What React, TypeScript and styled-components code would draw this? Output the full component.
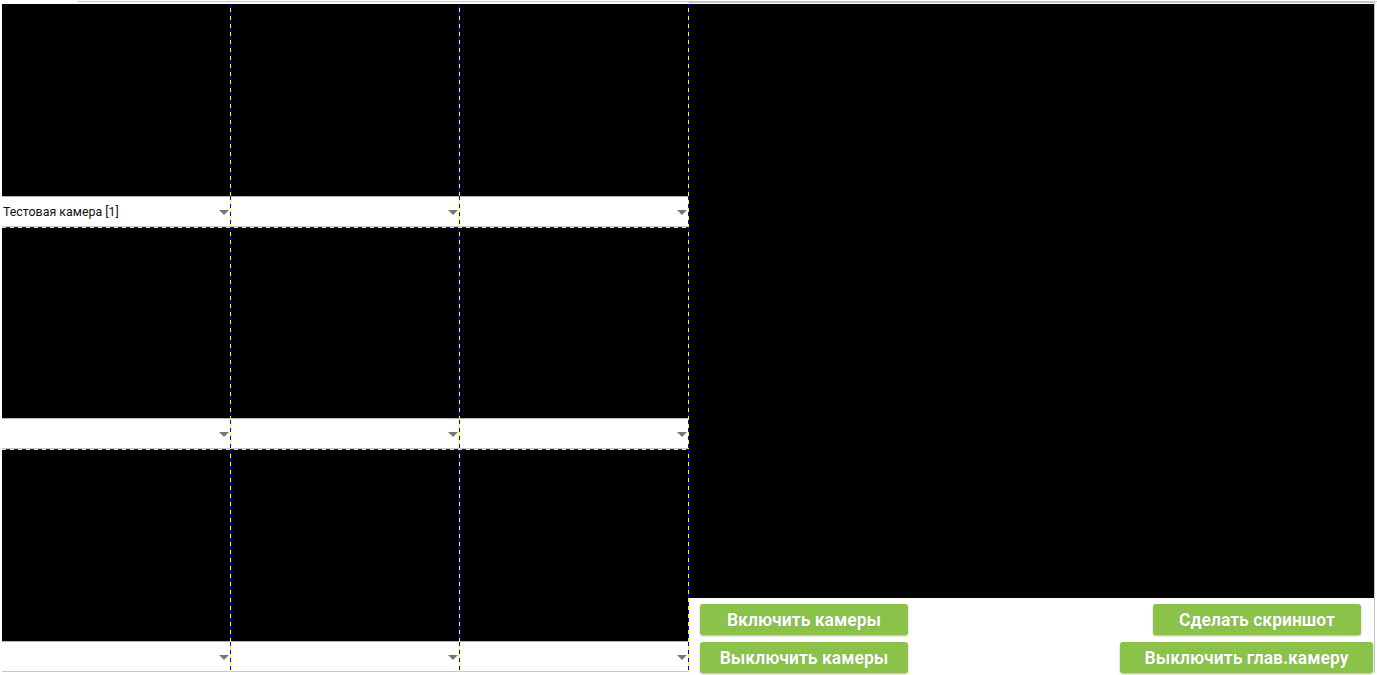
import React from "react";
import styled, { createGlobalStyle } from "styled-components";

const Global = createGlobalStyle`
  html, body { margin: 0; padding: 0; background: #fff; }
  body { font-family: Roboto, "Liberation Sans", sans-serif; overflow: hidden; }
`;

const Page = styled.div`
  width: 1377px;
  height: 675px;
  display: flex;
  flex-direction: column;
`;

const TopRule = styled.div`
  height: 1px;
  margin: 1px 0 2px 78px;
  background: #c4c4c4;
`;

const Body = styled.div`
  display: flex;
  padding-left: 2px;
`;

const GridArea = styled.div`
  display: flex;
  flex-direction: column;
  width: 687px;
`;

const Row = styled.div`
  display: flex;
`;

const Cell = styled.div`
  width: 228px;
  display: flex;
  flex-direction: column;
`;

const Video = styled.div<{ $h: number }>`
  height: ${(p) => p.$h}px;
  background: #000;
`;

const Select = styled.div`
  position: relative;
  height: 29px;
  background: #fff;
  border-top: 1px solid #b5b5b5;
  border-bottom: 1px solid #c8c8c8;
  display: flex;
  align-items: center;
  padding-left: 1px;
  font-size: 12.4px;
  color: #111;
`;

const Arrow = styled.span`
  position: absolute;
  right: 1px;
  top: 13px;
  width: 0;
  height: 0;
  border-left: 5px solid transparent;
  border-right: 5px solid transparent;
  border-top: 5px solid #777;
`;

const VDivider = styled.div`
  width: 1px;
  background: repeating-linear-gradient(
    to bottom,
    #0000ff 0px,
    #0000ff 4px,
    #ffff00 4px,
    #ffff00 8px
  );
`;

const HDivider = styled.div`
  height: 1px;
  width: 687px;
  background: repeating-linear-gradient(
    to right,
    #ffff00 0px,
    #ffff00 4px,
    #0000ff 4px,
    #0000ff 8px
  );
`;

const MainColumn = styled.div`
  width: 685px;
  display: flex;
  flex-direction: column;
  border-right: 1px solid #c4c4c4;
  border-top: 1px solid #c4c4c4;
  margin-top: -2px;
  padding-top: 1px;
`;

const MainVideo = styled.div`
  height: 594px;
  background: #000;
`;

const Controls = styled.div`
  display: flex;
  flex-direction: column;
  gap: 7px;
  padding-top: 6px;
`;

const ButtonRow = styled.div<{ $right: number }>`
  display: flex;
  justify-content: space-between;
  padding-left: 11px;
  padding-right: ${(p) => p.$right}px;
`;

const Button = styled.button<{ $w: number }>`
  width: ${(p) => p.$w}px;
  height: 31px;
  border: none;
  border-radius: 3px;
  background: #8bc34a;
  color: #fff;
  font-family: Roboto, "Liberation Sans", sans-serif;
  font-weight: 700;
  font-size: 17.5px;
  box-shadow: 0 1px 2px rgba(0, 0, 0, 0.3);
  text-shadow: 0 0 1px rgba(0, 0, 0, 0.25);
  padding: 0;
  cursor: pointer;
`;

const rows = [
  { h: 192, labels: ["Тестовая камера [1]", "", ""] },
  { h: 190, labels: ["", "", ""] },
  { h: 191, labels: ["", "", ""] },
];

export default function App() {
  return (
    <Page>
      <Global />
      <TopRule />
      <Body>
        <GridArea>
          {rows.map((r, ri) => (
            <React.Fragment key={ri}>
              <Row>
                {r.labels.map((l, ci) => (
                  <React.Fragment key={ci}>
                    <Cell>
                      <Video $h={r.h} />
                      <Select>
                        {l}
                        <Arrow />
                      </Select>
                    </Cell>
                    <VDivider />
                  </React.Fragment>
                ))}
              </Row>
              {ri < 2 && <HDivider />}
            </React.Fragment>
          ))}
        </GridArea>
        <MainColumn>
          <MainVideo />
          <Controls>
            <ButtonRow $right={13}>
              <Button $w={208}>Включить камеры</Button>
              <Button $w={208}>Сделать скриншот</Button>
            </ButtonRow>
            <ButtonRow $right={1}>
              <Button $w={208}>Выключить камеры</Button>
              <Button $w={253}>Выключить глав.камеру</Button>
            </ButtonRow>
          </Controls>
        </MainColumn>
      </Body>
    </Page>
  );
}
